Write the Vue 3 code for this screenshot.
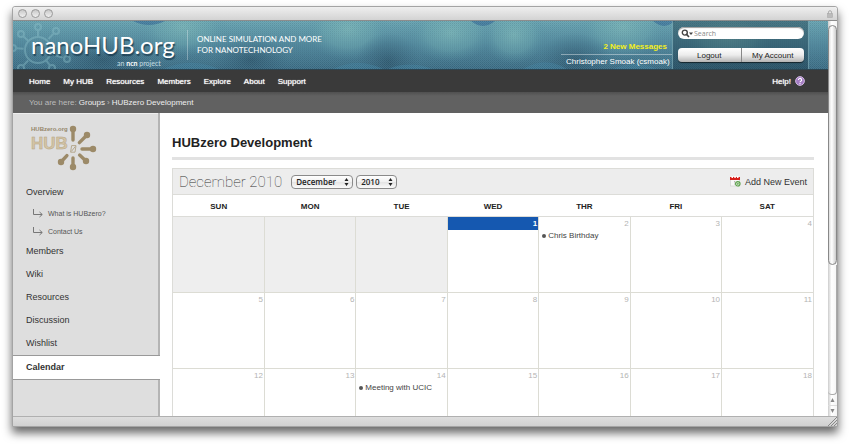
<script setup>
import { ref } from 'vue'

const mainNav = ['Home', 'My HUB', 'Resources', 'Members', 'Explore', 'About', 'Support']

const groupNav = [
  { label: 'Overview', children: ['What is HUBzero?', 'Contact Us'] },
  { label: 'Members' },
  { label: 'Wiki' },
  { label: 'Resources' },
  { label: 'Discussion' },
  { label: 'Wishlist' },
  { label: 'Calendar', active: true },
]

const months = ['January', 'February', 'March', 'April', 'May', 'June', 'July', 'August', 'September', 'October', 'November', 'December']
const years = ['2009', '2010', '2011']
const month = ref('December')
const year = ref('2010')
const query = ref('')

const dayNames = ['SUN', 'MON', 'TUE', 'WED', 'THR', 'FRI', 'SAT']
const today = 1
const firstWeekday = 3
const events = { 2: 'Chris Birthday', 14: 'Meeting with UCIC' }

const weeks = [0, 1, 2].map((w) =>
  dayNames.map((_, d) => {
    const day = w * 7 + d - firstWeekday + 1
    return { day: day > 0 ? day : null, today: day === today, event: events[day] }
  })
)

const burstNodes = [[25, 6], [43, 10], [8, 13], [0, 27], [54, 38], [39, 47], [8, 47]]
const spokes = [[43, 6], [57, 12], [63, 26], [56, 38], [43, 44], [31, 39]]
const hub = [43, 26]
const spokeStart = ([x, y]) => {
  const dx = x - hub[0]
  const dy = y - hub[1]
  const len = Math.hypot(dx, dy)
  return [hub[0] + (dx / len) * 9, hub[1] + (dy / len) * 9]
}
</script>

<template>
  <div class="desktop">
    <div class="window">
      <div class="titlebar">
        <span class="light"></span><span class="light"></span><span class="light"></span>
        <svg class="lock" width="6" height="8" viewBox="0 0 6 8">
          <path d="M1.5 4V2.2a1.5 1.5 0 0 1 3 0V4" fill="none" stroke="#aaa" />
          <rect x="0.5" y="3.5" width="5" height="4" fill="#bbb" stroke="#aaa" stroke-width="0.6" />
        </svg>
      </div>

      <div class="viewport">
        <div class="page">
          <header class="banner">
            <svg class="backdrop" viewBox="0 0 815 49" preserveAspectRatio="none" aria-hidden="true">
              <defs>
                <linearGradient id="sea" x1="0" y1="0" x2="0" y2="1">
                  <stop offset="0" stop-color="#64a0ae" />
                  <stop offset="0.5" stop-color="#4b8499" />
                  <stop offset="1" stop-color="#386a82" />
                </linearGradient>
                <radialGradient id="glow">
                  <stop offset="0" stop-color="#77b3b5" stop-opacity="0.8" />
                  <stop offset="0.6" stop-color="#68a6ae" stop-opacity="0.5" />
                  <stop offset="1" stop-color="#5390a2" stop-opacity="0" />
                </radialGradient>
                <radialGradient id="shade">
                  <stop offset="0" stop-color="#234a60" stop-opacity="0.6" />
                  <stop offset="1" stop-color="#2d5a75" stop-opacity="0" />
                </radialGradient>
                <pattern id="dots" width="2" height="2" patternUnits="userSpaceOnUse">
                  <rect width="1" height="1" fill="#fff" opacity="0.09" />
                  <rect x="1" y="1" width="1" height="1" fill="#fff" opacity="0.09" />
                  <rect x="1" width="1" height="1" fill="#123" opacity="0.09" />
                </pattern>
              </defs>
              <rect width="815" height="49" fill="url(#sea)" />
              <ellipse cx="170" cy="6" rx="45" ry="30" fill="url(#glow)" />
              <ellipse cx="335" cy="8" rx="42" ry="32" fill="url(#glow)" />
              <ellipse cx="438" cy="12" rx="42" ry="30" fill="url(#glow)" />
              <ellipse cx="501" cy="14" rx="32" ry="30" fill="url(#glow)" />
              <ellipse cx="610" cy="6" rx="45" ry="32" fill="url(#glow)" />
              <ellipse cx="715" cy="16" rx="45" ry="26" fill="url(#glow)" />
              <ellipse cx="90" cy="40" rx="50" ry="24" fill="url(#shade)" />
              <ellipse cx="238" cy="40" rx="38" ry="24" fill="url(#shade)" />
              <ellipse cx="375" cy="42" rx="32" ry="30" fill="url(#shade)" />
              <ellipse cx="562" cy="40" rx="36" ry="28" fill="url(#shade)" />
              <path d="M120 0h32q-8 4-16 4t-16-4zM458 0h24q-6 5-12 5t-12-5zM640 0h22q-6 5-11 5t-11-5z" fill="#2f6592" opacity="0.6" />
              <path d="M320 49q25-12 50 0zM375 49q22-9 44 0zM510 49q22-14 44 0zM150 49q28-13 56 0zM600 49q22-10 44 0z" fill="#3d7e9c" opacity="0.5" />
              <rect width="815" height="49" fill="url(#dots)" />
            </svg>
            <svg class="burst" width="62" height="49" viewBox="0 0 62 49" aria-hidden="true">
              <g fill="none" stroke="#8fc3cc" stroke-width="2" opacity="0.4">
                <circle cx="25" cy="29" r="13" />
                <template v-for="n in burstNodes" :key="n.join()">
                  <line
                    :x1="25 + (n[0] - 25) * 0.58" :y1="29 + (n[1] - 29) * 0.58"
                    :x2="25 + (n[0] - 25) * 0.85" :y2="29 + (n[1] - 29) * 0.85"
                  />
                  <circle :cx="n[0]" :cy="n[1]" r="3" />
                </template>
              </g>
            </svg>
            <a class="brand" href="#">
              <span class="wordmark">nanoHUB.org</span>
              <span class="byline">an <b>ncn</b> project</span>
            </a>
            <p class="tagline">ONLINE SIMULATION AND MORE<br />FOR NANOTECHNOLOGY</p>
            <div class="account">
              <a class="messages" href="#">2 New Messages</a>
              <a class="user" href="#">Christopher Smoak (csmoak)</a>
            </div>
            <div class="tools">
              <label class="search">
                <svg width="12" height="9" viewBox="0 0 12 9" aria-hidden="true">
                  <circle cx="3.8" cy="3.6" r="2.5" fill="none" stroke="#444" stroke-width="1.4" />
                  <path d="M5.6 5.4L8 8" stroke="#444" stroke-width="1.6" />
                  <path d="M8 3.6h4L10 6z" fill="#444" />
                </svg>
                <input v-model="query" type="text" placeholder="Search" aria-label="Search" />
              </label>
              <div class="buttons">
                <button type="button">Logout</button>
                <button type="button">My Account</button>
              </div>
            </div>
          </header>

          <nav class="mainnav">
            <a v-for="item in mainNav" :key="item" href="#">{{ item }}</a>
            <a class="help" href="#">Help!
              <svg width="10" height="10" viewBox="0 0 10 10" aria-hidden="true">
                <circle cx="5" cy="5" r="4.4" fill="#a57cc4" stroke="#d9c3e8" stroke-width="0.9" />
                <path d="M3.4 4a1.6 1.5 0 1 1 2.4 1.2Q5 5.6 5 6.2" fill="none" stroke="#fff" stroke-width="1.1" />
                <circle cx="5" cy="7.6" r="0.7" fill="#fff" />
              </svg>
            </a>
          </nav>

          <div class="crumbs">
            <span>You are here:</span>
            <a href="#">Groups</a>
            <span>›</span>
            <a href="#">HUBzero Development</a>
          </div>

          <div class="body">
            <aside class="sidebar">
              <svg class="group-logo" width="70" height="48" viewBox="0 0 70 48" role="img" aria-label="HUBzero.org">
                <text class="logo-small" x="1" y="8">HUBzero.org</text>
                <text class="logo-large" x="1" y="26">HUB</text>
                <g stroke="#9c8a68" fill="#9c8a68">
                  <template v-for="s in spokes" :key="s.join()">
                    <line :x1="spokeStart(s)[0]" :y1="spokeStart(s)[1]" :x2="s[0]" :y2="s[1]" stroke-width="3.4" stroke-linecap="round" />
                    <circle :cx="s[0]" :cy="s[1]" r="3.2" stroke="none" />
                  </template>
                </g>
                <path d="M41.6 22.6h4.4l-1 6.6h-4.4zM45.4 23.4l-4 5" fill="none" stroke="#b5a88e" stroke-width="1" />
              </svg>
              <ul class="menu">
                <li v-for="item in groupNav" :key="item.label">
                  <a class="entry" :class="{ active: item.active }" href="#">{{ item.label }}</a>
                  <ul v-if="item.children">
                    <li v-for="child in item.children" :key="child">
                      <a class="sub" href="#">
                        <svg width="12" height="9" viewBox="0 0 12 9" aria-hidden="true">
                          <path d="M1.5 0v5.5H10M7.5 3l2.8 2.5L7.5 8" fill="none" stroke="#777" />
                        </svg>
                        {{ child }}
                      </a>
                    </li>
                  </ul>
                </li>
              </ul>
            </aside>

            <main class="content">
              <h1>HUBzero Development</h1>
              <section class="calendar">
                <div class="toolbar">
                  <h2>December 2010</h2>
                  <span class="picker month">
                    <select v-model="month" aria-label="Month">
                      <option v-for="m in months" :key="m">{{ m }}</option>
                    </select>
                    <svg width="5" height="8" viewBox="0 0 5 8" aria-hidden="true"><path d="M0.5 3h4l-2-3zM0.5 5h4l-2 3z" fill="#222" /></svg>
                  </span>
                  <span class="picker year">
                    <select v-model="year" aria-label="Year">
                      <option v-for="y in years" :key="y">{{ y }}</option>
                    </select>
                    <svg width="5" height="8" viewBox="0 0 5 8" aria-hidden="true"><path d="M0.5 3h4l-2-3zM0.5 5h4l-2 3z" fill="#222" /></svg>
                  </span>
                  <a class="add" href="#">
                    <svg width="11" height="11" viewBox="0 0 11 11" aria-hidden="true">
                      <rect x="0.5" y="2" width="9" height="8" fill="#f8f8f8" stroke="#ccc" stroke-width="0.6" />
                      <rect x="0" y="1" width="10" height="3" fill="#d8201c" />
                      <path d="M1.5 0h1.5v2h-1.5zM4.3 0h1.5v2h-1.5zM7 0h1.5v2h-1.5z" fill="#fff" />
                      <path d="M4 5.5h1v3.5" fill="none" stroke="#aaa" stroke-width="0.8" />
                      <circle cx="7.8" cy="7.8" r="2.2" fill="#fff" stroke="#5ba04a" stroke-width="1.2" />
                      <path d="M7.8 6.6v2.4M6.6 7.8h2.4" stroke="#5ba04a" stroke-width="0.8" />
                    </svg>
                    Add New Event
                  </a>
                </div>
                <table>
                  <thead>
                    <tr><th v-for="d in dayNames" :key="d" scope="col">{{ d }}</th></tr>
                  </thead>
                  <tbody>
                    <tr v-for="(week, w) in weeks" :key="w">
                      <td v-for="(cell, d) in week" :key="d" :class="{ empty: !cell.day, today: cell.today }">
                        <div v-if="cell.day" class="date">{{ cell.day }}</div>
                        <a v-if="cell.event" class="event" href="#">{{ cell.event }}</a>
                      </td>
                    </tr>
                  </tbody>
                </table>
              </section>
            </main>
          </div>
        </div>

        <div class="scrollbar" aria-hidden="true">
          <div class="thumb"></div>
          <div class="track"></div>
          <svg width="9" height="21" viewBox="0 0 9 21">
            <path d="M2.5 7h4l-2-4zM2.5 14h4l-2 4z" fill="#888" />
            <path d="M0 10.5h9" stroke="#ddd" />
          </svg>
        </div>
      </div>

      <div class="statusbar">
        <svg width="10" height="9" viewBox="0 0 10 9" aria-hidden="true">
          <path d="M1 9L10 0M4 9l6-6M7 9l3-3" stroke="#888" />
        </svg>
      </div>
    </div>
  </div>
</template>

<style>
body {
  background: #fff;
}
</style>

<style scoped>
* {
  box-sizing: border-box;
}
.desktop {
  display: flex;
  height: 100vh;
  padding: 6px 12px 19px;
  overflow: hidden;
}
.window {
  display: flex;
  flex: 1;
  flex-direction: column;
  min-width: 0;
  border: 1px solid #a4a4a4;
  border-radius: 3px 3px 0 0;
  font-family: "Liberation Sans", Arial, sans-serif;
  font-size: 8px;
  color: #333;
  background: #fff;
  box-shadow: 0 6px 10px rgba(0, 0, 0, 0.6);
}
a {
  color: inherit;
  text-decoration: none;
}
ul {
  margin: 0;
  padding: 0;
  list-style: none;
}
.titlebar {
  display: flex;
  align-items: center;
  gap: 4px;
  height: 14px;
  padding: 0 4px 0 5px;
  border-bottom: 1px solid #8c8c8c;
  border-radius: 3px 3px 0 0;
  background: linear-gradient(#efefef, #d3d3d3);
}
.light {
  width: 9px;
  height: 9px;
  border: 1px solid #999;
  border-radius: 50%;
  background: linear-gradient(#c8c8c8, #f0f0f0);
}
.lock {
  margin-left: auto;
}
.viewport {
  display: flex;
  flex: 1;
  min-height: 0;
}
.page {
  display: flex;
  flex: 1;
  flex-direction: column;
  min-width: 0;
}

/* banner */
.banner {
  position: relative;
  display: flex;
  height: 49px;
  color: #fff;
  overflow: hidden;
  border-bottom: 1px solid #2b4552;
}
.backdrop {
  position: absolute;
  inset: 0;
  width: 100%;
  height: 100%;
}
.burst {
  position: absolute;
  top: 0;
  left: 0;
}
.brand {
  position: relative;
  display: flex;
  flex-direction: column;
  width: 174px;
  padding: 9px 0 0 18px;
  font-family: Lato, "Liberation Sans", sans-serif;
}
.wordmark {
  font-size: 24px;
  line-height: 29px;
  text-shadow: 1px 2px 1px rgba(20, 50, 70, 0.7);
}
.byline {
  padding-left: 86px;
  font-size: 7px;
  line-height: 9px;
  color: #c6dde2;
}
.byline b {
  color: #fff;
}
.tagline {
  position: relative;
  align-self: center;
  margin: 0;
  padding: 4px 0 4px 9px;
  border-left: 1px solid rgba(255, 255, 255, 0.3);
  font-family: Lato, "Liberation Sans", sans-serif;
  font-size: 8px;
  line-height: 11px;
  white-space: nowrap;
}
.account {
  position: relative;
  display: flex;
  flex-direction: column;
  align-self: flex-end;
  width: 111px;
  margin-left: auto;
  text-align: right;
  white-space: nowrap;
}
.messages {
  padding: 0 5px;
  border-bottom: 1px solid rgba(255, 255, 255, 0.4);
  line-height: 15px;
  font-weight: bold;
  color: #f4f01c;
}
.user {
  padding: 0 5px;
  line-height: 14px;
}
.tools {
  position: relative;
  width: 137px;
  margin-right: 19px;
  padding: 6px 4px 0 5px;
  border: solid rgba(160, 210, 220, 0.5);
  border-width: 0 1px;
  background: rgba(20, 50, 65, 0.4);
}
.search {
  display: flex;
  align-items: center;
  gap: 1px;
  height: 12px;
  padding: 0 3px;
  border-radius: 6px;
  background: #fff;
  box-shadow: inset 0 1px 1px #999;
}
.search input {
  flex: 1;
  min-width: 0;
  padding: 0;
  border: 0;
  outline: 0;
  background: none;
  font: 7px "Open Sans", sans-serif;
}
.search input::placeholder {
  color: #888;
}
.buttons {
  display: flex;
  height: 14px;
  margin-top: 9px;
  border-radius: 4px;
  overflow: hidden;
  box-shadow: 0 1px 1px rgba(0, 0, 0, 0.6);
}
.buttons button {
  flex: 1;
  padding: 0;
  border: 0;
  background: linear-gradient(#fff, #ececec 50%, #b4b4b4);
  font: 8px "Liberation Sans", Arial, sans-serif;
  color: #222;
}
.buttons button + button {
  border-left: 1px solid #888;
}

/* navigation bars */
.mainnav {
  display: flex;
  align-items: center;
  gap: 13px;
  height: 22px;
  padding: 0 23px 0 16px;
  background: #3a3a3a;
  color: #fff;
  text-shadow: 0 0 1px #fff;
}
.help {
  display: flex;
  align-items: center;
  gap: 4px;
  margin-left: auto;
}
.crumbs {
  display: flex;
  align-items: center;
  gap: 2px;
  height: 21px;
  padding: 0 16px;
  background: linear-gradient(#505050, #616161 4px);
  color: #bbb;
}
.crumbs a {
  color: #eee;
}

/* sidebar */
.body {
  display: flex;
  flex: 1;
  min-height: 0;
  overflow: hidden;
}
.sidebar {
  width: 147px;
  padding-top: 10px;
  background: #dedede;
  box-shadow: inset -2px 0 #b4b4b4, inset 0 1px #eee;
}
.group-logo {
  display: block;
  margin: 0 0 10px 17px;
}
.logo-small {
  font-size: 6px;
  font-weight: bold;
  fill: #94866a;
}
.logo-large {
  font-size: 17px;
  font-weight: bold;
  fill: #d3c4a6;
  stroke: #b5a583;
  stroke-width: 0.5px;
}
.entry {
  display: block;
  padding-left: 13px;
  font-size: 9px;
  line-height: 23px;
}
.entry.active {
  border: solid #999;
  border-width: 1px 0;
  background: #fff;
  font-weight: bold;
}
.sub {
  display: flex;
  align-items: center;
  gap: 4px;
  height: 18px;
  padding-left: 19px;
  font-size: 7px;
  color: #555;
}

/* calendar */
.content {
  flex: 1;
  min-width: 0;
  padding: 0 14px 0 12px;
}
h1 {
  margin: 0 0 8px;
  padding: 22px 0 7px;
  border-bottom: 3px solid #e2e2e2;
  font-size: 13px;
  line-height: 15px;
  color: #222;
}
.calendar {
  border: solid #dcdcd8;
  border-width: 1px 1px 0;
}
.toolbar {
  display: flex;
  align-items: center;
  height: 25px;
  padding: 0 6px;
  background: #ededed;
}
h2 {
  margin: 0 9px 0 0;
  font-family: Roboto, "Liberation Sans", sans-serif;
  font-size: 15px;
  font-weight: 100;
  color: #333;
}
.picker {
  position: relative;
  display: flex;
  margin-right: 3px;
}
.picker svg {
  position: absolute;
  top: 3px;
  right: 4px;
  pointer-events: none;
}
.picker select {
  appearance: none;
  width: 100%;
  height: 14px;
  padding: 0 4px;
  border: 1px solid #8a8a8a;
  border-radius: 4px;
  background: linear-gradient(#fff, #f0f0f0 50%, #e4e4e4 51%, #fafafa);
  font: 600 8px "Open Sans", sans-serif;
  color: #222;
}
.month {
  width: 62px;
}
.year {
  width: 41px;
}
.add {
  display: flex;
  align-items: center;
  gap: 4px;
  margin-left: auto;
  font-size: 9px;
}
table {
  width: 100%;
  table-layout: fixed;
  border-collapse: collapse;
}
th {
  height: 22px;
  padding: 2px 0 0;
  border: solid #dcdcd8;
  border-width: 1px 0;
  font-size: 8px;
  color: #222;
}
td {
  height: 76px;
  padding: 0;
  border: 1px solid #dcdcd4;
  border-width: 1px 1px 0 0;
  vertical-align: top;
}
td:last-child {
  border-right: 0;
}
td.empty {
  background: #eee;
}
.date {
  padding-right: 1px;
  line-height: 13px;
  text-align: right;
  color: #b4b4b4;
}
.today .date {
  background: #1558b0;
  font-weight: bold;
  color: #fff;
}
.event {
  display: flex;
  align-items: center;
  gap: 2px;
  padding-left: 3px;
  line-height: 12px;
  color: #444;
}
.event::before {
  content: "";
  width: 4px;
  height: 4px;
  border-radius: 50%;
  background: #555;
}

/* window chrome */
.scrollbar {
  display: flex;
  flex-direction: column;
  width: 9px;
  background: linear-gradient(90deg, #ccc, #fff 40%, #f4f4f4);
}
.thumb {
  flex: 240;
  margin-top: 4px;
  border: 1px solid #888;
  border-radius: 5px;
  background: linear-gradient(90deg, #ddd, #fff 40%, #ccc);
}
.track {
  flex: 130;
  border: 1px solid #aaa;
  border-width: 0 1px 1px 0;
  border-radius: 0 0 4px 4px;
}
.statusbar {
  display: flex;
  align-items: flex-end;
  justify-content: flex-end;
  height: 10px;
  border-top: 1px solid #b0b0b0;
  background: linear-gradient(#dedede, #d0d0d0);
}
</style>
